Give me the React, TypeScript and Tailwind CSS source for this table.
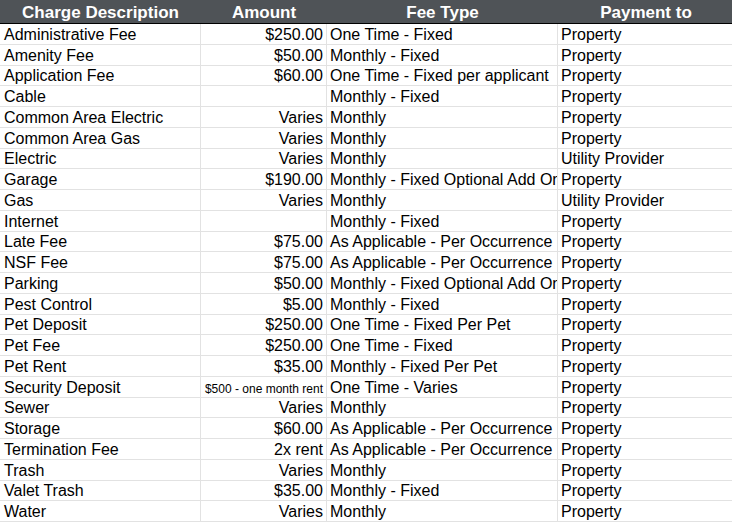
const rows: [string, string, string, string][] = [
  ["Administrative Fee", "$250.00", "One Time - Fixed", "Property"],
  ["Amenity Fee", "$50.00", "Monthly - Fixed", "Property"],
  ["Application Fee", "$60.00", "One Time - Fixed per applicant", "Property"],
  ["Cable", "", "Monthly - Fixed", "Property"],
  ["Common Area Electric", "Varies", "Monthly", "Property"],
  ["Common Area Gas", "Varies", "Monthly", "Property"],
  ["Electric", "Varies", "Monthly", "Utility Provider"],
  ["Garage", "$190.00", "Monthly - Fixed Optional Add On", "Property"],
  ["Gas", "Varies", "Monthly", "Utility Provider"],
  ["Internet", "", "Monthly - Fixed", "Property"],
  ["Late Fee", "$75.00", "As Applicable - Per Occurrence", "Property"],
  ["NSF Fee", "$75.00", "As Applicable - Per Occurrence", "Property"],
  ["Parking", "$50.00", "Monthly - Fixed Optional Add On", "Property"],
  ["Pest Control", "$5.00", "Monthly - Fixed", "Property"],
  ["Pet Deposit", "$250.00", "One Time - Fixed Per Pet", "Property"],
  ["Pet Fee", "$250.00", "One Time - Fixed", "Property"],
  ["Pet Rent", "$35.00", "Monthly - Fixed Per Pet", "Property"],
  ["Security Deposit", "$500 - one month rent", "One Time - Varies", "Property"],
  ["Sewer", "Varies", "Monthly", "Property"],
  ["Storage", "$60.00", "As Applicable - Per Occurrence", "Property"],
  ["Termination Fee", "2x rent", "As Applicable - Per Occurrence", "Property"],
  ["Trash", "Varies", "Monthly", "Property"],
  ["Valet Trash", "$35.00", "Monthly - Fixed", "Property"],
  ["Water", "Varies", "Monthly", "Property"],
]

const cols = "grid grid-cols-[201px_126px_231px_176px]"

export default function App() {
  return (
    <div className="h-[522px] w-[732px] overflow-hidden bg-white font-['Liberation_Sans',Arial,sans-serif] text-black">
      <div className={`${cols} h-[24px] border-b border-black bg-[#4f5357] text-[17px] font-bold text-white`}>
        <div className="flex items-center justify-center">Charge Description</div>
        <div className="flex items-center justify-center">Amount</div>
        <div className="flex items-center justify-center">Fee Type</div>
        <div className="flex items-center justify-center">Payment to</div>
      </div>
      {rows.map((r, i) => (
        <div key={i} className={`${cols} h-[20.75px] border-b border-[#e2e2e2] text-[16px] leading-none`}>
          <div className="flex items-end overflow-hidden whitespace-nowrap border-r border-[#e2e2e2] px-[4px] pb-[1px]">{r[0]}</div>
          <div
            className={`flex items-end justify-end overflow-hidden whitespace-nowrap border-r border-[#e2e2e2] px-[3px] ${
              r[1].length > 10 ? "pb-[2px] text-[12px]" : "pb-[1px]"
            }`}
          >
            {r[1]}
          </div>
          <div className="flex items-end overflow-hidden whitespace-nowrap border-r border-[#e2e2e2] px-[3px] pb-[1px]">{r[2]}</div>
          <div className="flex items-end overflow-hidden whitespace-nowrap px-[3px] pb-[1px]">{r[3]}</div>
        </div>
      ))}
    </div>
  )
}
